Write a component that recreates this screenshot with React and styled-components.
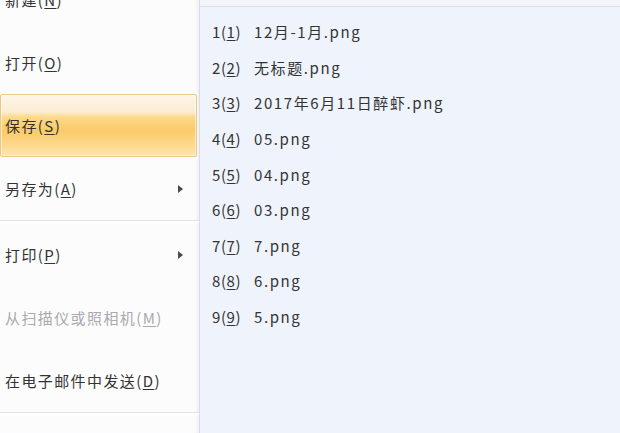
import React from "react";
import styled, { createGlobalStyle } from "styled-components";

const GlobalStyle = createGlobalStyle`
  html, body { margin: 0; padding: 0; overflow: hidden; }
  body {
    background: #f0f3fb;
    font-family: "Noto Sans CJK SC", "Noto Sans", "Liberation Sans", sans-serif;
  }
`;

const Frame = styled.div`
  display: grid;
  grid-template-columns: 200px 1fr;
  width: 620px;
  height: 433px;
  overflow: hidden;
`;

const LeftPanel = styled.div`
  background: #fdfcfd;
  border-right: 1px solid #dadde5;
  box-shadow: inset -4px 0 4px -3px rgba(200, 204, 215, 0.35);
  overflow: hidden;
`;

const MenuList = styled.div`
  display: flex;
  flex-direction: column;
  margin-top: -32px;
`;

const MenuItem = styled.div`
  display: flex;
  align-items: center;
  height: 63px;
  box-sizing: border-box;
  padding: 0 0 0 4px;
  margin-right: 2px;
  font-size: 15px;
  letter-spacing: 1.4px;
  color: ${(p) => (p.$disabled ? "#a9a9ae" : "#333333")};
  border: 1px solid transparent;
  border-radius: 2px;
  ${(p) =>
    p.$active &&
    `
    background: linear-gradient(
      to bottom,
      #fdf5e8 0%,
      #fcecd2 28%,
      #fcd98c 36%,
      #fbcb69 58%,
      #fdd88c 82%,
      #fde6ae 100%
    );
    border-color: #e6c98f;
    box-shadow: inset 0 0 0 1px rgba(255, 250, 235, 0.6);
  `}
`;

const Key = styled.span`
  text-decoration: underline;
  text-underline-offset: 2px;
`;

const Arrow = styled.span`
  margin-left: auto;
  margin-right: 13px;
  width: 0;
  height: 0;
  border-top: 4px solid transparent;
  border-bottom: 4px solid transparent;
  border-left: 5px solid #4a4a4a;
`;

const Separator = styled.div`
  height: 2px;
  border-top: 1px solid #e1e2e6;
  background: #ffffff;
`;

const RightPanel = styled.div`
  display: flex;
  flex-direction: column;
  background: #eff3fb;
`;

const HeaderStrip = styled.div`
  height: 6px;
  background: #f4f5fa;
  border-bottom: 1px solid #dde1ea;
`;

const RecentList = styled.div`
  display: flex;
  flex-direction: column;
  padding-top: 7px;
`;

const RecentRow = styled.div`
  display: flex;
  align-items: center;
  height: 35.6px;
  padding-left: 12px;
  font-size: 15px;
  letter-spacing: 1.6px;
  color: #333333;
`;

const Index = styled.span`
  width: 42px;
  flex: none;
  letter-spacing: 0.6px;
`;

const menu = [
  { label: "新建", key: "N" },
  { label: "打开", key: "O" },
  { label: "保存", key: "S", active: true },
  { label: "另存为", key: "A", arrow: true, sep: true },
  { label: "打印", key: "P", arrow: true },
  { label: "从扫描仪或照相机", key: "M", disabled: true },
  { label: "在电子邮件中发送", key: "D", sep: true },
  { label: "", key: "" },
];

const recent = [
  "12月-1月.png",
  "无标题.png",
  "2017年6月11日醉虾.png",
  "05.png",
  "04.png",
  "03.png",
  "7.png",
  "6.png",
  "5.png",
];

export default function App() {
  return (
    <>
      <GlobalStyle />
      <Frame>
        <LeftPanel>
          <MenuList>
            {menu.map((m, i) => (
              <React.Fragment key={i}>
                <MenuItem $active={m.active} $disabled={m.disabled}>
                  {m.label && (
                    <span>
                      {m.label}(<Key>{m.key}</Key>)
                    </span>
                  )}
                  {m.arrow && <Arrow />}
                </MenuItem>
                {m.sep && <Separator />}
              </React.Fragment>
            ))}
          </MenuList>
        </LeftPanel>
        <RightPanel>
          <HeaderStrip />
          <RecentList>
            {recent.map((name, i) => (
              <RecentRow key={i}>
                <Index>
                  {i + 1}(<Key>{i + 1}</Key>)
                </Index>
                <span>{name}</span>
              </RecentRow>
            ))}
          </RecentList>
        </RightPanel>
      </Frame>
    </>
  );
}
